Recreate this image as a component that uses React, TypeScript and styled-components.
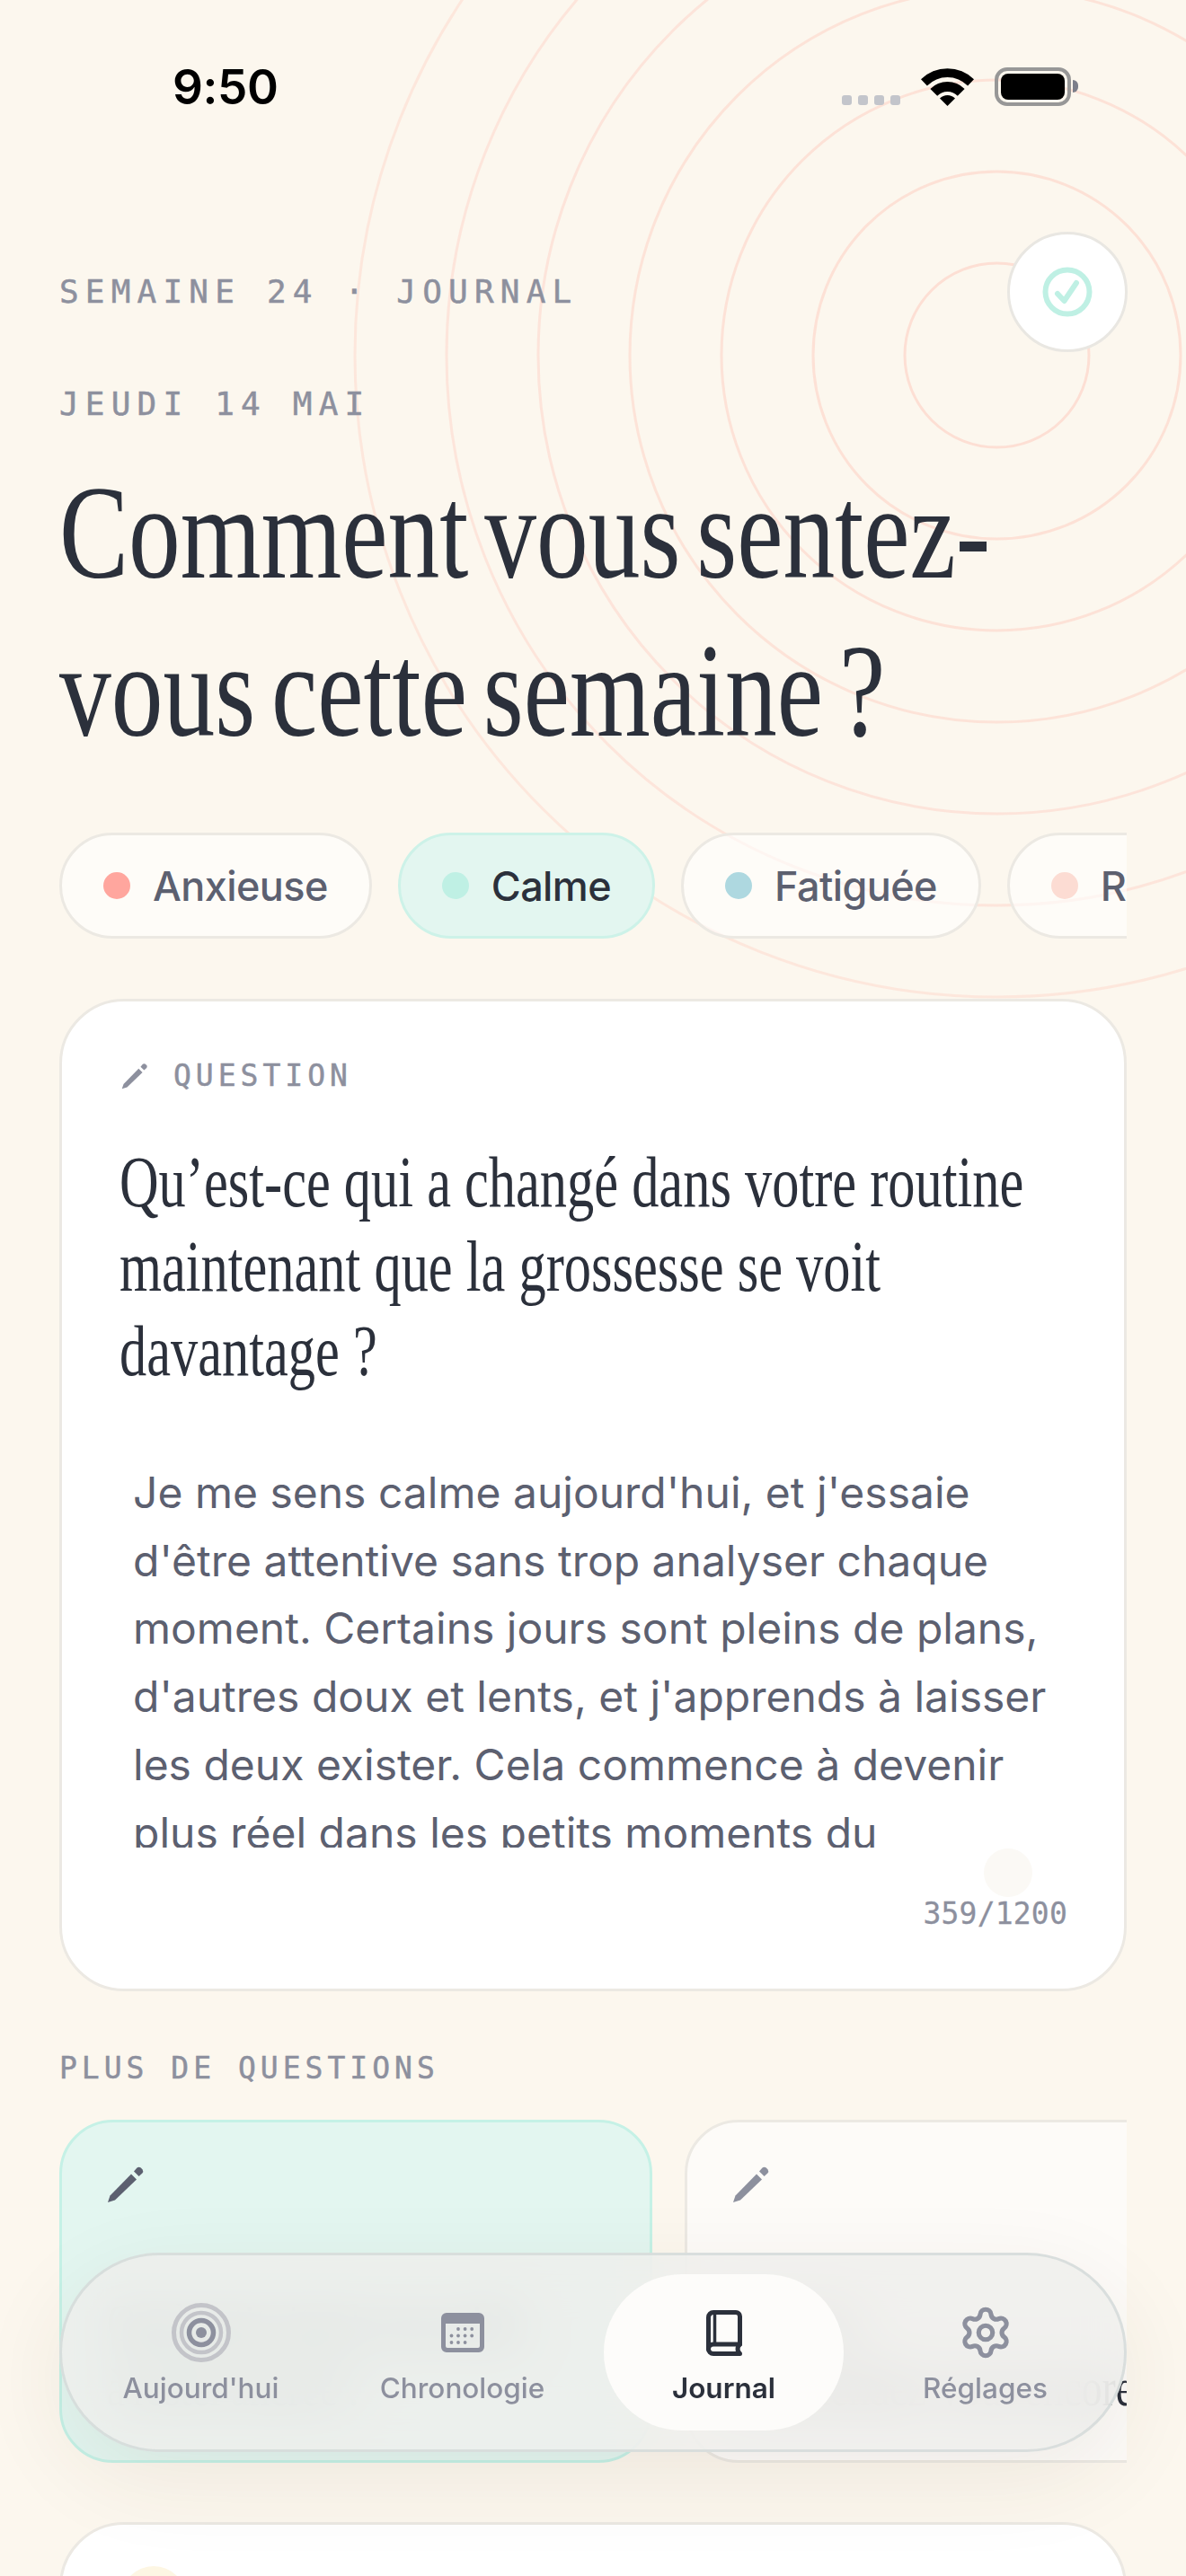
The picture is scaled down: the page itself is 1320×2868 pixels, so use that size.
import React from "react";
import styled, { createGlobalStyle } from "styled-components";
import { Settings } from "lucide-react";

const Global = createGlobalStyle`
  * { box-sizing: border-box; }
  html, body { margin: 0; padding: 0; background: #fcf7ee; }
`;

const sans = `"Inter", "Liberation Sans", sans-serif`;
const mono = `"DejaVu Sans Mono", "Liberation Mono", monospace`;
const serif = `"Liberation Serif", "Times New Roman", serif`;

const Screen = styled.div`
  position: relative;
  width: 1320px;
  height: 2868px;
  overflow: hidden;
  background: #fcf7ee;
  font-family: ${sans};
`;

const Rings = styled.svg`
  position: absolute;
  left: 0;
  top: 0;
  width: 1320px;
  height: 1200px;
  pointer-events: none;
`;

const StatusBar = styled.div`
  position: relative;
  height: 257px;
  padding: 0 128px 0 192px;
  display: flex;
  justify-content: space-between;
  align-items: flex-start;
`;

const Time = styled.div`
  margin-top: 64px;
  font-size: 53px;
  line-height: 66px;
  font-weight: 600;
  letter-spacing: -0.4px;
  color: #000;
`;

const StatusIcons = styled.div`
  display: flex;
  align-items: flex-end;
  margin-top: 75px;
  height: 43px;
`;

const Signal = styled.div`
  display: flex;
  gap: 7px;
  margin-right: 23px;
  margin-bottom: 1px;
`;

const SignalDot = styled.span`
  width: 11px;
  height: 11px;
  border-radius: 3px;
  background: #c3c5cb;
`;

const Battery = styled.div`
  position: relative;
  margin-left: 23px;
  width: 85px;
  height: 43px;
  border: 4.5px solid #979797;
  border-radius: 14px;
  padding: 3px;
`;

const BatteryFill = styled.div`
  width: 100%;
  height: 100%;
  border-radius: 8px;
  background: #000;
`;

const BatteryNub = styled.span`
  position: absolute;
  right: -12px;
  top: 10px;
  width: 6px;
  height: 14px;
  border-radius: 0 6px 6px 0;
  background: #7b7e8a;
`;

const Content = styled.main`
  position: relative;
  padding: 0 66px;
`;

const HeaderRow = styled.div`
  display: flex;
  justify-content: space-between;
  align-items: center;
  height: 135px;
`;

const Eyebrow = styled.div`
  font-family: ${mono};
  font-size: 36px;
  line-height: 48px;
  letter-spacing: 7.2px;
  -webkit-text-stroke: 0.5px #8d909e;
  color: #8d909e;
  text-transform: uppercase;
`;

const CheckButton = styled.div`
  width: 134px;
  height: 134px;
  margin-right: -1px;
  border-radius: 50%;
  background: #fff;
  border: 3px solid #e9e7e2;
  display: flex;
  align-items: center;
  justify-content: center;
`;

const DateLine = styled(Eyebrow)`
  margin-top: 34px;
`;

const Title = styled.h1`
  margin: 31px 0 0;
  width: 1500px;
  font-family: ${serif};
  font-weight: 400;
  font-size: 148px;
  line-height: 176px;
  word-spacing: -14px;
  color: #2b303b;
  white-space: nowrap;
  transform: scaleX(0.78);
  transform-origin: left top;
`;

const Chips = styled.div`
  display: flex;
  gap: 29px;
  margin-top: 70px;
  overflow: hidden;
`;

const Chip = styled.div<{ $active?: boolean }>`
  flex: none;
  height: 118px;
  padding: 0 46px;
  display: flex;
  align-items: center;
  gap: 25px;
  border-radius: 59px;
  border: 3px solid ${(p) => (p.$active ? "#cdf2e8" : "#ece9e3")};
  background: ${(p) => (p.$active ? "#e3f6f0" : "rgba(255,255,255,.6)")};
  font-size: 45px;
  font-weight: 500;
  letter-spacing: -0.6px;
  color: ${(p) => (p.$active ? "#2b303b" : "#5c6070")};
`;

const ChipDot = styled.span<{ $color: string }>`
  width: 30px;
  height: 30px;
  border-radius: 50%;
  background: ${(p) => p.$color};
`;

const QuestionCard = styled.section`
  position: relative;
  margin-top: 67px;
  padding: 62px 63px 64px 66px;
  border: 3px solid #ece9e3;
  border-radius: 72px;
  background: #fff;
`;

const QuestionLabel = styled.div`
  display: flex;
  align-items: center;
  gap: 28px;
  height: 40px;
  padding-top: 1px;
  font-family: ${mono};
  font-size: 33px;
  letter-spacing: 5px;
  -webkit-text-stroke: 0.5px #8d909e;
  color: #8d909e;
`;

const QuestionTitle = styled.h2`
  margin: 52px 0 0 -2px;
  width: 1400px;
  font-family: ${serif};
  font-weight: 400;
  font-size: 80px;
  line-height: 94px;
  color: #2b303b;
  white-space: nowrap;
  transform: scaleX(0.755);
  transform-origin: left top;
`;

const Answer = styled.div`
  margin-top: 73px;
  height: 433px;
  padding-left: 13px;
  overflow: hidden;
  font-size: 48px;
  line-height: 75.7px;
  color: #5c6070;
`;

const GhostDot = styled.span`
  position: absolute;
  left: 1026px;
  top: 943px;
  width: 54px;
  height: 54px;
  border-radius: 50%;
  background: #fbf9f5;
`;

const Counter = styled.div`
  margin-top: 55px;
  height: 38px;
  line-height: 38px;
  text-align: right;
  font-family: ${mono};
  font-size: 33px;
  letter-spacing: 0.2px;
  -webkit-text-stroke: 0.3px #8d909e;
  color: #8d909e;
`;

const SectionLabel = styled.div`
  margin-top: 66px;
  height: 39px;
  line-height: 39px;
  font-family: ${mono};
  font-size: 33px;
  letter-spacing: 5px;
  -webkit-text-stroke: 0.5px #8d909e;
  color: #8d909e;
`;

const CardRow = styled.div`
  display: flex;
  gap: 36px;
  margin-top: 38px;
  overflow: hidden;
`;

const PromptCard = styled.article<{ $active?: boolean }>`
  flex: none;
  width: 660px;
  height: 382px;
  padding: 48px 48px 45px 50px;
  display: flex;
  flex-direction: column;
  justify-content: space-between;
  border-radius: 60px;
  border: 3px solid ${(p) => (p.$active ? "#c5f1e6" : "#ece9e3")};
  background: ${(p) => (p.$active ? "#e3f6f0" : "#fdfbf8")};
  color: ${(p) => (p.$active ? "#5c6070" : "#8d909e")};
`;

const PromptText = styled.p`
  margin: 0;
  width: 1000px;
  font-family: ${serif};
  font-size: 60px;
  line-height: 72px;
  word-spacing: -4px;
  color: #2b303b;
  white-space: nowrap;
  transform: scaleX(0.76);
  transform-origin: left top;
`;

const BottomCard = styled.section`
  margin-top: 66px;
  height: 300px;
  padding: 46px 66px;
  border: 3px solid #ece9e3;
  border-radius: 72px;
  background: #fff;
`;

const SunDot = styled.div`
  width: 72px;
  height: 72px;
  border-radius: 50%;
  background: #fdf6e3;
`;

const Nav = styled.nav`
  position: absolute;
  left: 66px;
  right: 66px;
  bottom: 138px;
  height: 222px;
  padding: 21px;
  display: grid;
  grid-template-columns: repeat(4, 1fr);
  gap: 24px;
  border-radius: 111px;
  border: 3px solid rgba(205, 212, 212, 0.65);
  background: rgba(238, 238, 235, 0.82);
  backdrop-filter: blur(30px);
  box-shadow: 0 30px 100px rgba(70, 55, 40, 0.08);
`;

const NavItem = styled.div<{ $active?: boolean }>`
  position: relative;
  border-radius: 87px;
  background: ${(p) => (p.$active ? "#fdfcfa" : "transparent")};
  color: ${(p) => (p.$active ? "#2b303b" : "#8d909e")};
  display: flex;
  flex-direction: column;
  align-items: center;
`;

const NavIconSlot = styled.div`
  height: 107px;
  padding-top: 23px;
  display: flex;
  align-items: center;
  justify-content: center;
`;

const NavLabel = styled.div<{ $active?: boolean }>`
  font-size: 31.5px;
  line-height: 40px;
  font-weight: ${(p) => (p.$active ? 600 : 500)};
`;

const Pen = ({ size }: { size: number }) => (
  <svg width={size} height={size} viewBox="0 0 42 42" fill="currentColor">
    <path d="M1 41 L3.5 33.5 L27 9.5 L33 15.5 L9 38.5 Z" />
    <path d="M30 6.5 L33.5 2.5 Q35.5 0.8 37.8 2.6 L39.6 4.4 Q41 6.6 39.4 8.4 L35.6 12 Z" />
  </svg>
);

const CheckCircleIcon = () => (
  <svg width="56" height="56" viewBox="0 0 56 56" fill="none" stroke="#bff0e4" strokeWidth="6" strokeLinecap="round" strokeLinejoin="round">
    <circle cx="28" cy="28" r="24.5" />
    <path d="M17 30 L24.5 38 L38 18" />
  </svg>
);

const Wifi = () => (
  <svg width="59" height="42" viewBox="-1 0 59 42" fill="#000">
    <path d="M-1 12.3 A42 42 0 0 1 58 12.3 L51.1 19.4 A32 32 0 0 0 5.9 19.4 Z" />
    <path d="M9.4 22.9 A27 27 0 0 1 47.6 22.9 L39.8 30.7 A16 16 0 0 0 17.2 30.7 Z" />
    <path d="M20 33.5 A12 12 0 0 1 37 33.5 L28.5 42 Z" />
  </svg>
);

const RingsIcon = () => (
  <svg width="68" height="68" viewBox="0 0 68 68" fill="none">
    <circle cx="34" cy="34" r="30.5" stroke="#c3c4c9" strokeWidth="5" />
    <circle cx="34" cy="34" r="22" stroke="#c3c4c9" strokeWidth="4.5" />
    <circle cx="34" cy="34" r="13.5" stroke="#8d909e" strokeWidth="5.5" />
    <circle cx="34" cy="34" r="6" fill="#8d909e" />
  </svg>
);

const calendarDots = [
  [19, 18], [26.6, 18], [34.2, 18],
  [11.5, 25.5], [19, 25.5], [26.6, 25.5], [34.2, 25.5],
  [11.5, 33], [19, 33], [26.6, 33],
];

const CalendarIcon = () => (
  <svg width="48" height="44" viewBox="0 0 48 44" fill="#8d909e">
    <path fillRule="evenodd" d="M6 0H42a6 6 0 0 1 6 6V38a6 6 0 0 1-6 6H6a6 6 0 0 1-6-6V6a6 6 0 0 1 6-6Z M5 12V37a2 2 0 0 0 2 2H41a2 2 0 0 0 2-2V12Z" />
    {calendarDots.map(([x, y]) => (
      <circle key={`${x}-${y}`} cx={x} cy={y} r="1.9" />
    ))}
  </svg>
);

const BookIcon = () => (
  <svg width="40" height="51" viewBox="0 0 40 51" fill="none" stroke="#2b303b" strokeWidth="5" strokeLinejoin="round" strokeLinecap="round">
    <path d="M8 2.5H33a4.5 4.5 0 0 1 4.5 4.5V38H8a5.5 5.5 0 0 0-5.5 5.5V8A5.5 5.5 0 0 1 8 2.5Z" />
    <path d="M9.5 3V37" strokeWidth="3.5" />
    <path d="M2.5 43a5.5 5.5 0 0 0 5.5 5.5H37.5C34.5 46 34 41 37.5 38" />
  </svg>
);

const ringRadii = [102.5, 204.5, 306.5, 408.5, 510.5, 612.5, 714.5];

export default function App() {
  return (
    <Screen>
      <Global />
      <Rings viewBox="0 0 1320 1200" fill="none">
        {ringRadii.map((r, i) => (
          <circle key={r} cx="1109.5" cy="395.5" r={r} stroke="#fddfd4" strokeWidth={3} opacity={1 - i * 0.05} />
        ))}
      </Rings>
      <StatusBar>
        <Time>9:50</Time>
        <StatusIcons>
          <Signal>
            <SignalDot />
            <SignalDot />
            <SignalDot />
            <SignalDot />
          </Signal>
          <Wifi />
          <Battery>
            <BatteryFill />
            <BatteryNub />
          </Battery>
        </StatusIcons>
      </StatusBar>
      <Content>
        <HeaderRow>
          <Eyebrow>Semaine 24 · Journal</Eyebrow>
          <CheckButton>
            <CheckCircleIcon />
          </CheckButton>
        </HeaderRow>
        <DateLine>Jeudi 14 mai</DateLine>
        <Title>
          Comment vous sentez-
          <br />
          vous cette semaine ?
        </Title>
        <Chips>
          <Chip>
            <ChipDot $color="#ffa69e" />
            Anxieuse
          </Chip>
          <Chip $active>
            <ChipDot $color="#bff0e4" />
            Calme
          </Chip>
          <Chip>
            <ChipDot $color="#aed8e0" />
            Fatiguée
          </Chip>
          <Chip>
            <ChipDot $color="#fcdcd3" />
            Reconnaissante
          </Chip>
        </Chips>
        <QuestionCard>
          <QuestionLabel>
            <Pen size={30} />
            QUESTION
          </QuestionLabel>
          <QuestionTitle>
            Qu’est-ce qui a changé dans votre routine
            <br />
            maintenant que la grossesse se voit
            <br />
            davantage ?
          </QuestionTitle>
          <Answer>
            Je me sens calme aujourd'hui, et j'essaie d'être attentive sans trop analyser chaque moment. Certains jours sont pleins de plans, d'autres doux et lents, et j'apprends à laisser les deux exister. Cela commence à devenir plus réel dans les petits moments du quotidien, et je prends le temps de les remarquer.
          </Answer>
          <GhostDot />
          <Counter>359/1200</Counter>
        </QuestionCard>
        <SectionLabel>PLUS DE QUESTIONS</SectionLabel>
        <CardRow>
          <PromptCard $active>
            <Pen size={42} />
            <PromptText>
              Quel petit rituel vous aide
              <br />
              à rester ancrée ?
            </PromptText>
          </PromptCard>
          <PromptCard>
            <Pen size={42} />
            <PromptText>
              Et vous,
              <br />
              Qu'attendez-vous encore de vous ?
            </PromptText>
          </PromptCard>
        </CardRow>
        <BottomCard>
          <SunDot />
        </BottomCard>
      </Content>
      <Nav>
        <NavItem>
          <NavIconSlot>
            <RingsIcon />
          </NavIconSlot>
          <NavLabel>Aujourd'hui</NavLabel>
        </NavItem>
        <NavItem>
          <NavIconSlot>
            <CalendarIcon />
          </NavIconSlot>
          <NavLabel>Chronologie</NavLabel>
        </NavItem>
        <NavItem $active>
          <NavIconSlot>
            <BookIcon />
          </NavIconSlot>
          <NavLabel $active>Journal</NavLabel>
        </NavItem>
        <NavItem>
          <NavIconSlot>
            <Settings size={62} strokeWidth={2} />
          </NavIconSlot>
          <NavLabel>Réglages</NavLabel>
        </NavItem>
      </Nav>
    </Screen>
  );
}
